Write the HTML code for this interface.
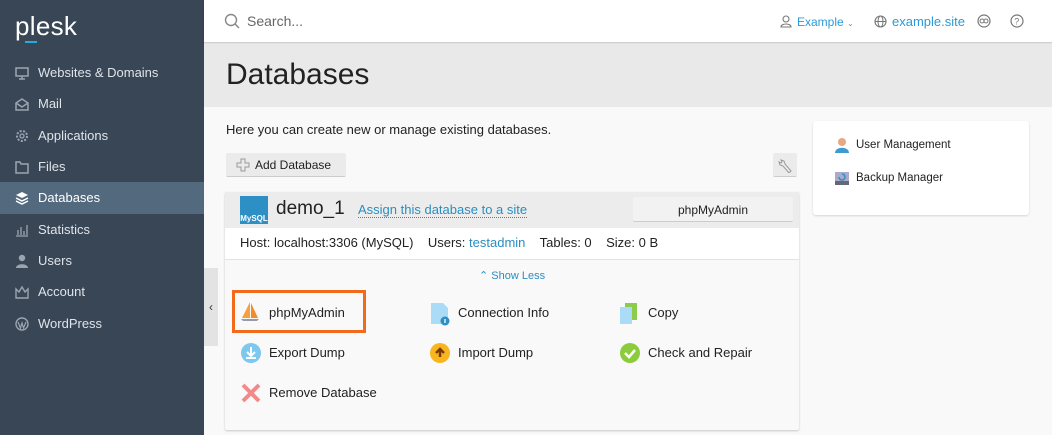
<!DOCTYPE html>
<html><head><meta charset="utf-8"><style>
*{box-sizing:border-box;margin:0;padding:0}
body{width:1052px;height:435px;overflow:hidden;font-family:"Liberation Sans","DejaVu Sans",sans-serif;background:#f9f9f9;position:relative;color:#222}
.sb{position:absolute;left:0;top:0;width:204px;height:435px;background:#394656}
.logo{position:absolute;left:15px;top:11px;color:#fff;font-size:26px;letter-spacing:0.3px}
.logo i{position:absolute;left:10px;top:30px;width:12px;height:2px;background:#28aade}
.nav{position:absolute;left:0;width:204px;height:32px;color:#dfe4ea;font-size:13px;line-height:32px;padding-left:38px}
.nav.act{background:#53697d;color:#fff}
.nav svg{position:absolute;left:15px;top:9px}
.hdr{position:absolute;left:204px;top:0;right:0;height:43px;background:#fff;border-bottom:1px solid #d0d0d0;box-shadow:0 1px 2px rgba(0,0,0,.15)}
.band{position:absolute;left:204px;top:44px;right:0;height:63px;background:#e9e9e9}
.t{position:absolute;white-space:nowrap}
.btn{position:absolute;background:#ebebeb;border-bottom:1px solid #ccc;border-radius:2px}
.ic{position:absolute}
</style></head><body>
<div class="sb">
<div class="logo">plesk<i></i></div>
<div class="nav" style="top:57px"><svg width="14" height="14"><rect x="1" y="2" width="12" height="8" fill="none" stroke="#9aa5b1" stroke-width="1.5"/><path d="M4 13h6M7 10v3" stroke="#9aa5b1" stroke-width="1.5"/></svg>Websites &amp; Domains</div>
<div class="nav" style="top:88px"><svg width="14" height="14"><path d="M1 6l6-4 6 4v7H1z M1 6l6 4 6-4" fill="none" stroke="#9aa5b1" stroke-width="1.5"/></svg>Mail</div>
<div class="nav" style="top:120px"><svg width="14" height="14"><circle cx="7" cy="7" r="5" fill="none" stroke="#9aa5b1" stroke-width="2" stroke-dasharray="2 1.5"/><circle cx="7" cy="7" r="2" fill="none" stroke="#9aa5b1" stroke-width="1.3"/></svg>Applications</div>
<div class="nav" style="top:151px"><svg width="14" height="14"><path d="M1 2h4l1 2h7v9H1z" fill="none" stroke="#9aa5b1" stroke-width="1.5"/></svg>Files</div>
<div class="nav act" style="top:182px"><svg width="14" height="14"><path d="M7 1l6 3-6 3-6-3z" fill="#fff"/><path d="M1 7l6 3 6-3M1 10l6 3 6-3" fill="none" stroke="#fff" stroke-width="1.5"/></svg>Databases</div>
<div class="nav" style="top:214px"><svg width="14" height="14"><path d="M1 13h12M3 12V7M6 12V4M9 12V8M12 12V2" stroke="#9aa5b1" stroke-width="1.3"/></svg>Statistics</div>
<div class="nav" style="top:245px"><svg width="14" height="14"><circle cx="7" cy="4" r="3.2" fill="#9aa5b1"/><path d="M1 14c0-5 12-5 12 0z" fill="#9aa5b1"/></svg>Users</div>
<div class="nav" style="top:276px"><svg width="14" height="14"><path d="M1 4l3 3 3-5 3 5 3-3v9H1z" fill="none" stroke="#9aa5b1" stroke-width="1.4"/></svg>Account</div>
<div class="nav" style="top:308px"><svg width="14" height="14"><circle cx="7" cy="7" r="6" fill="none" stroke="#9aa5b1" stroke-width="1.4"/><path d="M3 5l2.5 6L7 6l1.5 5L11 5" fill="none" stroke="#9aa5b1" stroke-width="1.2"/></svg>WordPress</div>
</div>
<div style="position:absolute;left:204px;top:268px;width:14px;height:78px;background:#e3e3e3;font-size:12px;color:#333;line-height:78px;text-align:center">‹</div>
<div class="hdr">
<svg class="ic" style="left:20px;top:13px" width="16" height="16"><circle cx="7" cy="7" r="5.5" fill="none" stroke="#888" stroke-width="1.4"/><path d="M11 11l4 4" stroke="#888" stroke-width="1.4"/></svg>
<div class="t" style="left:43px;top:13px;font-size:14px;color:#666">Search...</div>
<svg class="ic" style="left:576px;top:15px" width="12" height="13"><circle cx="6" cy="4" r="3" fill="none" stroke="#777" stroke-width="1.1"/><path d="M1 12c0-4 10-4 10 0z" fill="none" stroke="#777" stroke-width="1.1"/></svg>
<div class="t" style="left:593px;top:15px;font-size:12px;color:#2a9ad6">Example <span style="font-size:8px;color:#888">⌄</span></div>
<svg class="ic" style="left:670px;top:15px" width="13" height="13"><circle cx="6.5" cy="6.5" r="5.5" fill="none" stroke="#777" stroke-width="1.1"/><ellipse cx="6.5" cy="6.5" rx="2.5" ry="5.5" fill="none" stroke="#777"/><path d="M1 6.5h11" stroke="#777"/></svg>
<div class="t" style="left:688px;top:14px;font-size:13px;color:#2a9ad6">example.site</div>
<svg class="ic" style="left:773px;top:14px" width="14" height="14"><circle cx="7" cy="7" r="6" fill="none" stroke="#777" stroke-width="1.2"/><circle cx="5" cy="7" r="2" fill="none" stroke="#777"/><circle cx="9" cy="7" r="2" fill="none" stroke="#777"/></svg>
<svg class="ic" style="left:806px;top:14px" width="14" height="14"><circle cx="7" cy="7" r="6" fill="none" stroke="#777" stroke-width="1.2"/><text x="4.3" y="10.5" font-size="9" fill="#777" font-family="Liberation Sans">?</text></svg>
</div>
<div class="band"></div>
<div class="t" style="left:226px;top:58px;font-size:30px;color:#222">Databases</div>
<div class="t" style="left:226px;top:122px;font-size:13px">Here you can create new or manage existing databases.</div>
<div class="btn" style="left:226px;top:153px;width:120px;height:24px"><svg class="ic" style="left:10px;top:5px" width="14" height="14"><path d="M5 1h4v4h4v4H9v4H5V9H1V5h4z" fill="none" stroke="#999"/></svg><div class="t" style="left:29px;top:5px;font-size:12px">Add Database</div></div>
<div class="btn" style="left:773px;top:153px;width:24px;height:24px"><svg class="ic" style="left:5px;top:4px" width="15" height="16"><path d="M3 3l3 1 1 3 6 7-2 2-6-7-3-1-1-3 2 1 1-1z" fill="none" stroke="#999"/></svg></div>
<div style="position:absolute;left:225px;top:192px;width:574px;height:238px;background:#f9f9f9;box-shadow:0 1px 2px rgba(0,0,0,.2);border-radius:2px">
<div style="position:absolute;left:0;top:0;width:574px;height:36px;background:#ececec"></div>
<div style="position:absolute;left:15px;top:4px;width:28px;height:28px;background:#2d8fc4;color:#fff;font-size:8px;font-weight:bold;padding-top:18px;text-align:center">MySQL</div>
<div class="t" style="left:51px;top:6px;font-size:19px">demo_1</div>
<div class="t" style="left:133px;top:10px;font-size:13px;color:#2a8ec0;border-bottom:1px dotted #2a8ec0">Assign this database to a site</div>
<div class="btn" style="left:408px;top:5px;width:160px;height:25px;background:#f2f2f2"><div class="t" style="left:0;width:160px;text-align:center;top:6px;font-size:12px">phpMyAdmin</div></div>
<div style="position:absolute;left:0;top:36px;width:574px;height:32px;background:#fff;border-bottom:1px solid #e3e3e3"></div>
<div class="t" style="left:15px;top:43px;font-size:13px">Host: localhost:3306 (MySQL) &nbsp;&nbsp; Users: <span style="color:#2a8ec0">testadmin</span> &nbsp;&nbsp; Tables: 0 &nbsp;&nbsp; Size: 0 B</div>
<div class="t" style="left:254px;top:77px;font-size:11px;color:#2a8ec0">⌃ Show Less</div>
<div style="position:absolute;left:7px;top:98px;width:134px;height:43px;border:3px solid #f26b1d"></div>
<svg class="ic" style="left:15px;top:108px" width="20" height="22"><path d="M10 2L2 18h8z" fill="#f5a03a"/><path d="M11 3l7 15h-7z" fill="#f28c28"/><path d="M1 19h18l-2 2H3z" fill="#99a"/></svg>
<div class="t" style="left:44px;top:113px;font-size:13px">phpMyAdmin</div>
<svg class="ic" style="left:205px;top:110px" width="20" height="24"><path d="M1 1h12l5 5v16H1z" fill="#aadcf7"/><circle cx="15" cy="19" r="4.5" fill="#2d8fc4"/><path d="M15 17v4" stroke="#fff" stroke-width="1.3"/></svg>
<div class="t" style="left:233px;top:113px;font-size:13px">Connection Info</div>
<svg class="ic" style="left:394px;top:110px" width="20" height="24"><path d="M6 1h12v17H6z" fill="#8ccc4a"/><path d="M1 5h12v17H1z" fill="#aadcf7"/></svg>
<div class="t" style="left:423px;top:113px;font-size:13px">Copy</div>
<svg class="ic" style="left:15px;top:150px" width="22" height="22"><circle cx="11" cy="11" r="10" fill="#7cc8ee"/><path d="M11 5v8M7 10l4 4 4-4M6 16h10" stroke="#fff" stroke-width="2" fill="none"/></svg>
<div class="t" style="left:44px;top:153px;font-size:13px">Export Dump</div>
<svg class="ic" style="left:204px;top:150px" width="22" height="22"><circle cx="11" cy="11" r="10" fill="#f8b520"/><path d="M11 15V8M7 11l4-4 4 4" stroke="#7a3a00" stroke-width="2.5" fill="none"/></svg>
<div class="t" style="left:233px;top:153px;font-size:13px">Import Dump</div>
<svg class="ic" style="left:394px;top:150px" width="22" height="22"><circle cx="11" cy="11" r="10" fill="#8ccc3c"/><path d="M6 11l4 4 6-7" stroke="#fff" stroke-width="2.5" fill="none"/></svg>
<div class="t" style="left:423px;top:153px;font-size:13px">Check and Repair</div>
<svg class="ic" style="left:15px;top:190px" width="22" height="22"><path d="M3 3l16 16M19 3L3 19" stroke="#f38a8a" stroke-width="4"/></svg>
<div class="t" style="left:44px;top:193px;font-size:13px">Remove Database</div>
</div>
<div style="position:absolute;left:813px;top:121px;width:216px;height:94px;background:#fff;border-radius:3px;box-shadow:0 1px 2px rgba(0,0,0,.15)">
<svg class="ic" style="left:21px;top:16px" width="16" height="16"><circle cx="8" cy="5" r="4" fill="#e8a880"/><path d="M1 16c0-7 14-7 14 0z" fill="#3d9bd0"/></svg>
<div class="t" style="left:43px;top:18px;font-size:11.5px">User Management</div>
<svg class="ic" style="left:21px;top:50px" width="16" height="15"><rect x="1" y="1" width="14" height="13" fill="#aac"/><rect x="1" y="10" width="14" height="4" fill="#667"/><path d="M5 6a3 3 0 1 0 3-3" stroke="#2d8fc4" stroke-width="1.5" fill="none"/></svg>
<div class="t" style="left:43px;top:51px;font-size:11.5px">Backup Manager</div>
</div>
</body></html>
